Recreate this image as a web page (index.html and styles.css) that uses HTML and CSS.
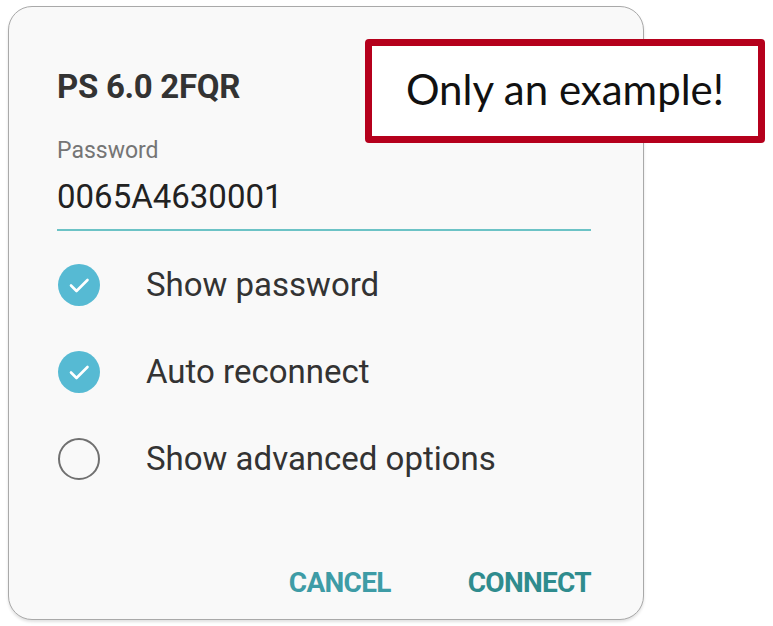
FILE: index.html
```html
<!DOCTYPE html>
<html lang="en">
<head>
    <meta charset="UTF-8">
    <meta name="viewport" content="width=device-width, initial-scale=1.0">
    <title>Wi-Fi - PS 6.0 2FQR</title>
    <link rel="stylesheet" href="styles.css">
</head>
<body>
    <div class="page">
        <div class="dialog">
            <h1 class="dialog-title">PS 6.0 2FQR</h1>
            <label class="field-label" for="password">Password</label>
            <div class="field-value" id="password">0065A4630001</div>
            <ul class="options">
                <li class="option">
                    <span class="check checked">
                        <svg viewBox="0 0 40 40" width="40" height="40"><path d="M12 20.5l5.5 5.5 11-11" fill="none" stroke="#fff" stroke-width="2.6" stroke-linecap="round" stroke-linejoin="round"/></svg>
                    </span>
                    <span class="option-text">Show password</span>
                </li>
                <li class="option">
                    <span class="check checked">
                        <svg viewBox="0 0 40 40" width="40" height="40"><path d="M12 20.5l5.5 5.5 11-11" fill="none" stroke="#fff" stroke-width="2.6" stroke-linecap="round" stroke-linejoin="round"/></svg>
                    </span>
                    <span class="option-text">Auto reconnect</span>
                </li>
                <li class="option">
                    <span class="check"></span>
                    <span class="option-text">Show advanced options</span>
                </li>
            </ul>
            <div class="actions">
                <button type="button" class="action cancel">CANCEL</button>
                <button type="button" class="action connect">CONNECT</button>
            </div>
        </div>
        <div class="note">Only an example!</div>
    </div>
</body>
</html>
```

FILE: styles.css
```css
* {
    margin: 0;
    padding: 0;
    box-sizing: border-box;
}
body {
    font-family: Roboto, 'Liberation Sans', Arial, sans-serif;
    background-color: #FFFFFF;
    color: #222222;
}
.page {
    position: relative;
    width: 773px;
    height: 626px;
    padding: 6px 0 0 8px;
}
.dialog {
    width: 636px;
    height: 614px;
    padding: 60px 52px 0 48px;
    background-color: #F9F9F9;
    border: 1.5px solid #A9A9A9;
    border-radius: 24px;
    box-shadow: 0 2px 3px rgba(0, 0, 0, 0.12);
    display: flex;
    flex-direction: column;
}
.dialog-title {
    font-size: 33px;
    line-height: 40px;
    font-weight: 700;
    color: #333333;
    letter-spacing: -0.3px;
}
.field-label {
    margin-top: 30px;
    font-size: 23px;
    line-height: 28px;
    color: #757575;
}
.field-value {
    margin-top: 12px;
    padding-bottom: 12px;
    font-size: 33px;
    line-height: 40px;
    color: #222222;
    border-bottom: 2px solid #6CC3C6;
}
.options {
    list-style: none;
    margin-top: 10px;
}
.option {
    height: 87px;
    display: flex;
    align-items: center;
    gap: 46px;
}
.check {
    width: 42px;
    height: 42px;
    margin-left: 1px;
    border-radius: 50%;
    border: 2px solid #707070;
    flex-shrink: 0;
    display: flex;
    align-items: center;
    justify-content: center;
}
.check.checked {
    border: none;
    background-color: #56BAD3;
}
.option-text {
    font-size: 33px;
    color: #333333;
}
.actions {
    margin-top: auto;
    margin-bottom: 20px;
    display: flex;
    justify-content: flex-end;
    gap: 77px;
}
.action {
    background: none;
    border: none;
    font-family: Roboto, 'Liberation Sans', Arial, sans-serif;
    font-size: 28px;
    line-height: 32px;
    font-weight: 700;
    letter-spacing: -0.7px;
    color: #3E9CA6;
    cursor: pointer;
}
.connect {
    color: #2F8C8E;
}
.note {
    position: absolute;
    left: 365px;
    top: 39px;
    width: 400px;
    height: 104px;
    border: 7px solid #B5001C;
    border-radius: 4px;
    background-color: #FFFFFF;
    font-family: Lato, 'Open Sans', sans-serif;
    font-size: 42px;
    color: #111111;
    display: flex;
    align-items: center;
    justify-content: center;
    padding-bottom: 4px;
}
```
